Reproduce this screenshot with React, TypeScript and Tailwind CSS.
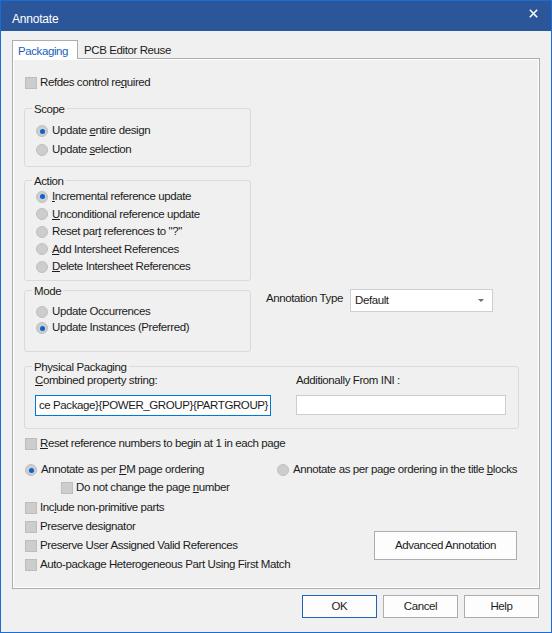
import React from 'react';

const Check: React.FC = () => (
  <span className="inline-block w-[12px] h-[12px] shrink-0 bg-[#cdcdcd] border border-[#bdbdbd]" />
);

const Radio: React.FC<{ on?: boolean }> = ({ on }) => (
  <span className="inline-flex w-[12px] h-[12px] shrink-0 items-center justify-center rounded-full bg-[#cdcdcd] border border-[#bfbfbf]">
    {on && <span className="block w-[5px] h-[5px] rounded-full bg-[#0a63d3]" />}
  </span>
);

const CheckRow: React.FC<{ children: React.ReactNode; className?: string }> = ({ children, className }) => (
  <div className={'flex items-center gap-[3px] h-[16px] ' + (className || '')}>
    <Check />
    <span className="whitespace-nowrap">{children}</span>
  </div>
);

const RadioRow: React.FC<{ on?: boolean; children: React.ReactNode; className?: string }> = ({ on, children, className }) => (
  <div className={'flex items-center gap-[4px] ' + (className || 'h-[16px]')}>
    <Radio on={on} />
    <span className="whitespace-nowrap">{children}</span>
  </div>
);

const Group: React.FC<{ title: string; className: string; children: React.ReactNode }> = ({ title, className, children }) => (
  <div className={'relative border border-[#dadada] rounded-[3px] ' + className}>
    <span className="absolute left-[7px] top-[-8px] px-[2px] leading-[16px] bg-[#f0f0f0] whitespace-nowrap">{title}</span>
    {children}
  </div>
);

const Btn: React.FC<{ label: string; primary?: boolean; className: string }> = ({ label, primary, className }) => (
  <button
    className={
      'flex items-center justify-center bg-[#fdfdfd] border ' +
      (primary ? 'border-[#1e63b8] ' : 'border-[#adadad] ') +
      className
    }
  >
    {label}
  </button>
);

export default function App() {
  return (
    <div className="w-[552px] h-[633px] flex flex-col bg-[#f0f0f0] border border-[#1b6cd3] font-['Liberation_Sans',Arial,sans-serif] text-[11.5px] tracking-[-0.4px] text-[#1c1c1c] overflow-hidden">
      {/* title bar */}
      <div className="h-[30px] shrink-0 flex items-start justify-between bg-[#2b579a] pl-[11px] pr-[13px]">
        <span className="mt-[10px] leading-[16px] text-white text-[12px] tracking-[-0.2px]">Annotate</span>
        <svg width="9" height="9" viewBox="0 0 9 9" className="mt-[8px]">
          <path d="M0.8 0.8 L8.2 8.2 M8.2 0.8 L0.8 8.2" stroke="#ffffff" strokeWidth="1.6" />
        </svg>
      </div>

      <div className="flex flex-col px-[11px] pt-[9px]">
        {/* tabs */}
        <div className="flex items-end h-[18px]">
          <div className="relative z-10 -mb-[1px] h-[19px] w-[66px] bg-white border border-b-0 border-[#adadad] pl-[5px] pt-[2px] leading-[16px] text-[#1a5fc0]">
            Packaging
          </div>
          <div className="h-[17px] pl-[6px] pt-[1px] leading-[16px]">PCB Editor Reuse</div>
        </div>

        {/* panel */}
        <div className="h-[531px] flex flex-col border border-[#adadad] shadow-[inset_0_0_0_1px_#ffffff] bg-[#f0f0f0] pl-[11px] pt-[16px]">
          <CheckRow className="ml-[1px]">
            Refdes control re<u>q</u>uired
          </CheckRow>

          <Group title="Scope" className="mt-[17px] w-[227px] h-[59px]">
            <div className="flex flex-col gap-[3px] pl-[11px] pt-[14px]">
              <RadioRow on>
                Update <u>e</u>ntire design
              </RadioRow>
              <RadioRow>
                Update <u>s</u>election
              </RadioRow>
            </div>
          </Group>

          <Group title="Action" className="mt-[13px] w-[227px] h-[101px]">
            <div className="flex flex-col pl-[11px] pt-[7px]">
              <RadioRow on className="h-[17.5px]">
                <u>I</u>ncremental reference update
              </RadioRow>
              <RadioRow className="h-[17.5px]">
                <u>U</u>nconditional reference update
              </RadioRow>
              <RadioRow className="h-[17.5px]">
                Reset par<u>t</u> references to "?"
              </RadioRow>
              <RadioRow className="h-[17.5px]">
                <u>A</u>dd Intersheet References
              </RadioRow>
              <RadioRow className="h-[17.5px]">
                <u>D</u>elete Intersheet References
              </RadioRow>
            </div>
          </Group>

          <div className="mt-[9px] flex items-start">
            <Group title="Mode" className="w-[227px] h-[62px]">
              <div className="flex flex-col pl-[11px] pt-[13px]">
                <RadioRow>Update Occurrences</RadioRow>
                <RadioRow on>Update Instances (Preferred)</RadioRow>
              </div>
            </Group>
            <div className="ml-[15px] -mt-[1px] flex items-start">
              <span className="w-[84px] mt-[1px] leading-[16px] whitespace-nowrap">Annotation Type</span>
              <div className="w-[143px] h-[23px] flex items-center justify-between bg-white border border-[#cfcfcf] pl-[4px] pr-[8px]">
                <span className="pt-[1px]">Default</span>
                <svg width="6" height="3" viewBox="0 0 6 3">
                  <polygon points="0,0 6,0 3,3" fill="#6f6f6f" />
                </svg>
              </div>
            </div>
          </div>

          <Group title="Physical Packaging" className="mt-[14px] w-[495px] h-[63px]">
            <div className="flex pl-[10px] pt-[5px]">
              <div className="flex flex-col">
                <span className="leading-[16px]">
                  <u>C</u>ombined property string:
                </span>
                <div className="mt-[7px] w-[236px] h-[21px] flex items-center justify-end overflow-hidden bg-white border border-[#0078d7] pr-[2px] whitespace-nowrap">
                  <span className="pt-[1px]">{'ce Package}{POWER_GROUP}{PARTGROUP}'}</span>
                </div>
              </div>
              <div className="ml-[25px] flex flex-col">
                <span className="leading-[16px]">Additionally From INI :</span>
                <div className="mt-[7px] w-[210px] h-[20px] bg-white border border-[#cdcdcd]" />
              </div>
            </div>
          </Group>

          <CheckRow className="mt-[7px] ml-[1px]">
            <u>R</u>eset reference numbers to begin at 1 in each page
          </CheckRow>

          <div className="mt-[10px] ml-[1px] flex items-center">
            <div className="w-[252px]">
              <RadioRow on>
                Annotate as per <u>P</u>M page ordering
              </RadioRow>
            </div>
            <RadioRow>
              Annotate as per page ordering in the title <u>b</u>locks
            </RadioRow>
          </div>

          <CheckRow className="mt-[2px] ml-[37px]">
            Do not change the page <u>n</u>umber
          </CheckRow>

          <div className="mt-[4px] w-[493px] flex items-start justify-between">
            <div className="ml-[1px] flex flex-col gap-[3px]">
              <CheckRow>
                Inc<u>l</u>ude non-primitive parts
              </CheckRow>
              <CheckRow>Preserve designator</CheckRow>
              <CheckRow>Preserve User Assigned Valid References</CheckRow>
              <CheckRow>Auto-package Heterogeneous Part Using First Match</CheckRow>
            </div>
            <Btn label="Advanced Annotation" className="mt-[31px] w-[143px] h-[29px]" />
          </div>
        </div>

        {/* footer */}
        <div className="mt-[6px] flex justify-end gap-[6px] pr-[1px]">
          <Btn label="OK" primary className="w-[75px] h-[23px]" />
          <Btn label="Cancel" className="w-[75px] h-[23px]" />
          <Btn label="Help" className="w-[75px] h-[23px]" />
        </div>
      </div>
    </div>
  );
}
